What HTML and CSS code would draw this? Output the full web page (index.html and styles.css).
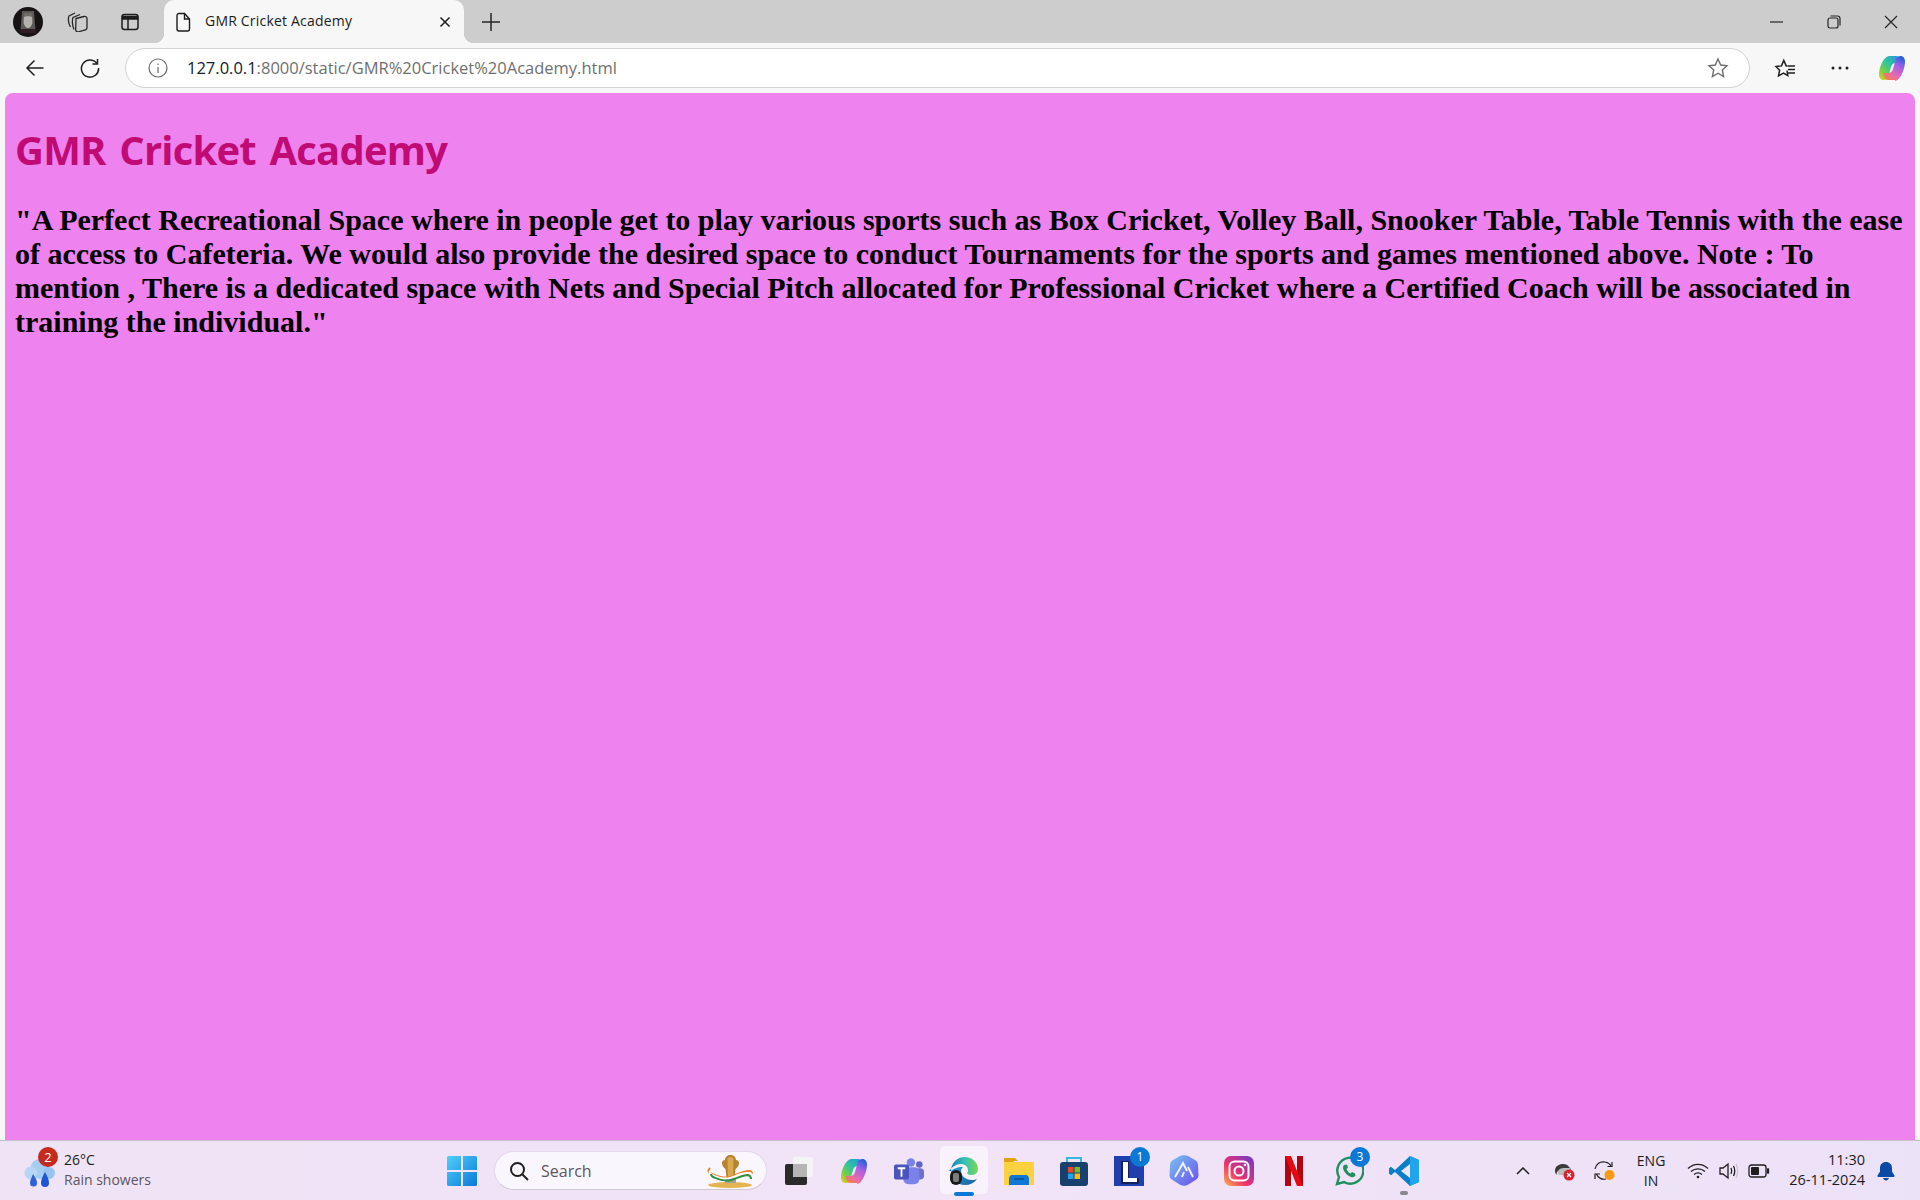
FILE: index.html
```html
<!DOCTYPE html>
<html lang="en">
<head>
    <meta charset="UTF-8">
    <meta name="viewport" content="width=device-width, initial-scale=1.0">
    <title>GMR Cricket Academy</title>
    <link rel="stylesheet" href="styles.css">
</head>
<body>
    <div class="tab-strip">
        <div class="strip-left">
            <svg class="avatar" viewBox="0 0 30 30" width="30" height="30">
                <circle cx="15" cy="15" r="15" fill="#171314"/>
                <path d="M9 4h12l1.500 20h-15z" fill="#5b5857"/>
                <path d="M11 7c2-1.500 6-1.500 8 0l.5 9c-1 3-2.500 5-4.500 5s-3.500-2-4.500-5z" fill="#b5b1ac"/>
                <path d="M11 7c2-1.500 6-1.500 8 0v3c-2-1-6-1-8 0z" fill="#6f6b69"/>
                <path d="M7.500 22h15l.5 4H7z" fill="#2f1c24"/>
            </svg>
            <svg class="strip-icon" viewBox="0 0 22 20" width="22" height="20" fill="none" stroke="#262626" stroke-width="1.300">
                <path d="M10 6.500l8-2c1.500-.3 3 .3 3 2v9c0 1-.5 2-1.500 2.300l-7 2c-1.500.3-2.500-.3-2.800-2z"/>
                <path d="M8 17.500C6 13 6 7.500 7 5.500l7-3"/>
                <path d="M4.500 15C2 11 2 6 3 4l6-3"/>
            </svg>
            <svg class="strip-icon" viewBox="0 0 20 20" width="20" height="20" fill="none" stroke="#1c1c1c" stroke-width="1.500">
                <rect x="2" y="2.500" width="16" height="15" rx="2.500"/>
                <path d="M2.500 4.500h15V7h-15z" fill="#1c1c1c"/>
                <path d="M8 7v10"/>
            </svg>
        </div>
        <div class="tab">
            <svg viewBox="0 0 16 20" width="16" height="20" fill="none" stroke="#1c1c1c" stroke-width="1.400">
                <path d="M2 3.500C2 2 3 1.500 4 1.500h5.500L14.500 7v10c0 1.200-.8 2-2 2H4c-1.200 0-2-.8-2-2z"/>
                <path d="M9.500 1.500V7h5"/>
            </svg>
            <span class="tab-title">GMR Cricket Academy</span>
            <svg class="tab-close" viewBox="0 0 12 12" width="12" height="12" fill="none" stroke="#1c1c1c" stroke-width="1.500">
                <path d="M1.500 1.500l9 9M10.500 1.500l-9 9"/>
            </svg>
        </div>
        <svg class="new-tab" viewBox="0 0 20 20" width="20" height="20" stroke="#262626" stroke-width="1.500">
            <path d="M10 1v18M1 10h18"/>
        </svg>
        <div class="window-buttons">
            <svg viewBox="0 0 14 14" width="14" height="14" stroke="#262626" stroke-width="1.200"><path d="M0 7h13"/></svg>
            <svg viewBox="0 0 14 14" width="14" height="14" fill="none" stroke="#262626" stroke-width="1.200">
                <rect x="1" y="3" width="10" height="10" rx="2"/>
                <path d="M3.500 1h7c1.500 0 2.500 1 2.500 2.500v7"/>
            </svg>
            <svg viewBox="0 0 14 14" width="14" height="14" stroke="#262626" stroke-width="1.200"><path d="M1 1l12 12M13 1L1 13"/></svg>
        </div>
    </div>

    <div class="toolbar">
        <svg class="nav-icon" viewBox="0 0 20 20" width="20" height="20" fill="none" stroke="#1f1f1f" stroke-width="1.500">
            <path d="M18.500 10H2M9.500 2.500L2 10l7.500 7.500"/>
        </svg>
        <svg class="nav-icon reload" viewBox="0 0 20 20" width="20" height="20" fill="none" stroke="#1f1f1f" stroke-width="1.500">
            <path d="M17 5.500A8.600 8.600 0 1 0 18.600 10"/>
            <path d="M17.500 1v5h-5"/>
        </svg>
        <div class="address-bar">
            <svg class="info-icon" viewBox="0 0 20 20" width="20" height="20" fill="none" stroke="#6c6c6c" stroke-width="1.200">
                <circle cx="10" cy="10" r="9"/>
                <path d="M10 9v6M10 5.500v1.500"/>
            </svg>
            <span class="url"><span class="url-host">127.0.0.1</span>:8000/static/GMR%20Cricket%20Academy.html</span>
            <svg class="fav-star" viewBox="0 0 22 22" width="22" height="22" fill="none" stroke="#6e6e6e" stroke-width="1.400">
                <path d="M11 2l2.700 6 6.300.7-4.700 4.300 1.300 6.500L11 16.200 5.400 19.500l1.300-6.500L2 8.700 8.300 8z"/>
            </svg>
        </div>
        <svg class="tool-icon favs" viewBox="0 0 22 22" width="22" height="22" fill="none" stroke="#1f1f1f" stroke-width="1.500">
            <path d="M13 13.500l.8 5-4.300-2.400-5 2.800 1.100-5.600L2 9.500l5.500-.6L9.800 3.500l2.400 5.400h1.500"/>
            <path d="M14 9h7M14 12.500h7M14 16h7"/>
        </svg>
        <svg class="tool-icon dots" viewBox="0 0 18 4" width="18" height="4" fill="#1f1f1f">
            <circle cx="2" cy="2" r="1.500"/><circle cx="9" cy="2" r="1.500"/><circle cx="16" cy="2" r="1.500"/>
        </svg>
        <svg class="tool-icon copilot-top" viewBox="0 0 28 28" width="28" height="28">
            <defs>
                <linearGradient id="copA" x1="1" y1="0" x2="0" y2="1">
                    <stop offset="0" stop-color="#1f8fe8"/><stop offset=".45" stop-color="#2fc4a0"/><stop offset=".75" stop-color="#7fd03c"/><stop offset="1" stop-color="#f2cf2a"/>
                </linearGradient>
                <linearGradient id="copB" x1=".8" y1="0" x2=".2" y2="1">
                    <stop offset="0" stop-color="#1f5fdc"/><stop offset=".35" stop-color="#a860e4"/><stop offset=".7" stop-color="#e86ab0"/><stop offset="1" stop-color="#f6823a"/>
                </linearGradient>
            </defs>
            <path d="M11 2h7c2 0 3 1 3.500 3L23 9h-5c-3 0-4.500 2-5 4l-2.500 9c-.7 2.500-2.500 4-5 4C2.500 26 1 23.500 1 20.500 1 14 5 3 11 2z" fill="url(#copA)"/>
            <path d="M17 26h-7c-2 0-3-1-3.500-3L5 19h5c3 0 4.500-2 5-4l2.500-9c.7-2.500 2.500-4 5-4 3 0 4.500 2.500 4.500 5.500 0 6.500-4 18.500-10 19.500z" fill="url(#copB)"/>
        </svg>
    </div>

    <div class="page-wrap">
        <main class="page">
            <h1>GMR Cricket Academy</h1>
            <h2>"A Perfect Recreational Space where in people get to play various sports such as Box Cricket, Volley Ball, Snooker Table, Table Tennis with the ease of access to Cafeteria. We would also provide the desired space to conduct Tournaments for the sports and games mentioned above. Note : To mention , There is a dedicated space with Nets and Special Pitch allocated for Professional Cricket where a Certified Coach will be associated in training the individual."</h2>
        </main>
    </div>

    <footer class="taskbar">
        <div class="weather">
            <div class="weather-icon">
                <svg viewBox="0 0 34 34" width="34" height="34">
                    <circle cx="17" cy="15" r="10" fill="#a5cdf2"/>
                    <circle cx="8" cy="19" r="6.500" fill="#b7d6f5"/>
                    <circle cx="26" cy="19" r="6" fill="#98c3ee"/>
                    <path d="M10 20c2 3 4 6 4 9a3.500 3.500 0 0 1-7 0c0-3 2-6 3-9z" fill="#2d62d8"/>
                    <path d="M22 18c2 4 4 7 4 11a4 4 0 0 1-8 0c0-4 2-7 4-11z" fill="#1f56d4"/>
                </svg>
                <span class="weather-badge">2</span>
            </div>
            <div class="weather-text">
                <span class="temp">26°C</span>
                <span class="forecast">Rain showers</span>
            </div>
        </div>

        <div class="task-center">
            <svg class="start" viewBox="0 0 30 30" width="30" height="30">
                <defs>
                    <linearGradient id="winA" x1="0" y1="0" x2="1" y2="1">
                        <stop offset="0" stop-color="#4fd0fb"/><stop offset="1" stop-color="#0a78d8"/>
                    </linearGradient>
                </defs>
                <path d="M1.500 0H14v14H0V1.500A1.500 1.500 0 0 1 1.500 0zM16 0h12.500A1.500 1.500 0 0 1 30 1.500V14H16zM0 16h14v14H1.500A1.500 1.500 0 0 1 0 28.500zM16 16h14v12.500a1.500 1.500 0 0 1-1.500 1.500H16z" fill="url(#winA)"/>
            </svg>
            <div class="search-box">
                <svg viewBox="0 0 20 20" width="20" height="20" fill="none" stroke="#1f1f1f" stroke-width="2">
                    <circle cx="8.500" cy="8.500" r="6.500"/><path d="M13.500 13.500L19 19"/>
                </svg>
                <span class="search-label">Search</span>
                <svg class="search-emblem" viewBox="0 0 48 34" width="48" height="34">
                    <ellipse cx="23" cy="31" rx="22" ry="3" fill="#e3b552"/>
                    <rect x="18" y="24" width="11" height="5" fill="#a5a19a"/>
                    <path d="M15 9c0-2 1.500-3 3-3 0-3 2.500-5 5.500-5s5.500 2 5.500 5c1.500 0 3 1 3 3 0 3-2 5-3.500 6l-1 9h-8l-1-9c-1.500-1-3.500-3-3.500-6z" fill="#b8832f"/>
                    <path d="M20.500 4c1.500-1.500 4.500-1.500 6 0l-.5 20h-5z" fill="#d9a850"/>
                    <path d="M3 14c-3 3-1 5 2 6 5 2 11 5 18 3 7-2 12-6 19-6 2 0 3 1 3 3" fill="none" stroke="#e9812a" stroke-width="2"/>
                    <path d="M3 17c-1 2 0 3 2 4 5 2 11 5 18 3 7-2 12-6 19-5 2 0 3 2 3 4" fill="none" stroke="#fff" stroke-width="2"/>
                    <path d="M4 20c0 2 1 2 2 3 5 2 11 5 18 3 7-2 11-5 17-5 2 .5 3 2 3 4" fill="none" stroke="#2f8f3c" stroke-width="2"/>
                </svg>
            </div>
            <div class="task-icons">
                <svg class="task-icon" viewBox="0 0 30 30" width="30" height="30">
                    <rect x="9" y="1" width="20" height="20" rx="2" fill="#f4f4f4" opacity=".9"/>
                    <rect x="1" y="8" width="22" height="21" rx="2" fill="#2a2a2a"/>
                    <rect x="9" y="8" width="14" height="13" fill="#b5b5b5"/>
                </svg>
                <svg class="task-icon" viewBox="0 0 28 28" width="28" height="28">
                    <path d="M11 2h7c2 0 3 1 3.500 3L23 9h-5c-3 0-4.500 2-5 4l-2.500 9c-.7 2.500-2.500 4-5 4C2.500 26 1 23.500 1 20.500 1 14 5 3 11 2z" fill="url(#copA)"/>
                    <path d="M17 26h-7c-2 0-3-1-3.500-3L5 19h5c3 0 4.500-2 5-4l2.500-9c.7-2.500 2.500-4 5-4 3 0 4.500 2.500 4.500 5.500 0 6.500-4 18.500-10 19.500z" fill="url(#copB)"/>
                </svg>
                <svg class="task-icon" viewBox="0 0 32 30" width="32" height="30">
                    <circle cx="27" cy="8" r="3.500" fill="#6264c8"/>
                    <rect x="22" y="12" width="10" height="12" rx="4" fill="#6d70cc"/>
                    <circle cx="18" cy="6" r="4.500" fill="#7b83eb"/>
                    <rect x="10" y="11" width="17" height="18" rx="5" fill="#7b83eb"/>
                    <rect x="0" y="8" width="16" height="16" rx="2" fill="#4b53bc"/>
                    <path d="M4 12h8M8 12v9" stroke="#fff" stroke-width="2" fill="none"/>
                </svg>
                <div class="task-active">
                    <svg viewBox="0 0 30 30" width="30" height="30">
                        <defs>
                            <linearGradient id="edgeA" x1="0" y1="0" x2="1" y2="1">
                                <stop offset="0" stop-color="#2a9fd8"/><stop offset="1" stop-color="#1c5f9f"/>
                            </linearGradient>
                            <linearGradient id="edgeB" x1="0" y1="0" x2="1" y2="0">
                                <stop offset="0" stop-color="#1a78c0"/><stop offset=".55" stop-color="#35c1b1"/><stop offset="1" stop-color="#7dd854"/>
                            </linearGradient>
                        </defs>
                        <path d="M2 15C2 7 8 1 16 1c7 0 13 5 13 12 0 4-3 6-7 6-2 0-4-1-4-2 1-1 1-2 1-3 0-3-3-6-7-6-5 0-9 3-12 7z" fill="url(#edgeB)"/>
                        <path d="M2 15c0 8 6 14 14 14 5 0 9-2 12-6-1 .5-3 1-5 1-5 0-11-3-11-9 0-2 1-3 2-4-6 0-10 2-12 4z" fill="url(#edgeA)"/>
                        <rect x="1" y="14" width="12" height="15" rx="6" fill="#1a1a1a"/>
                        <rect x="4" y="17" width="6" height="9" rx="2" fill="#7d7d7d"/>
                    </svg>
                    <span class="active-pip"></span>
                </div>
                <svg class="task-icon" viewBox="0 0 30 30" width="30" height="30">
                    <path d="M0 2h11l3 3h-4l-2 3H0z" fill="#dfa40f"/>
                    <path d="M0 6h30v23H0z" fill="#fbd13f"/>
                    <path d="M5 23c0-2 1-4 3-4h14c2 0 3 2 3 4v6H5z" fill="#0f78d4"/>
                    <path d="M10 23h10" stroke="#0b4f8c" stroke-width="1.500"/>
                </svg>
                <svg class="task-icon" viewBox="0 0 30 32" width="30" height="32">
                    <path d="M8 8V3h14v5" fill="none" stroke="#35b8e0" stroke-width="2"/>
                    <rect x="1" y="7" width="28" height="24" rx="3" fill="#17406e"/>
                    <rect x="9" y="12" width="5.500" height="5.500" fill="#e8492c"/>
                    <rect x="15.500" y="12" width="5.500" height="5.500" fill="#7db824"/>
                    <rect x="9" y="18.500" width="5.500" height="5.500" fill="#20a4ee"/>
                    <rect x="15.500" y="18.500" width="5.500" height="5.500" fill="#fcb817"/>
                </svg>
                <div class="task-badged">
                    <svg viewBox="0 0 30 30" width="30" height="30">
                        <rect width="30" height="30" fill="#1f3fae"/>
                        <path d="M7 5h8v17h10v6H7z" fill="#12205c"/>
                        <path d="M9 6h5v16h9v4H9z" fill="#fff"/>
                    </svg>
                    <span class="count-badge">1</span>
                </div>
                <svg class="task-icon" viewBox="0 0 30 32" width="30" height="32">
                    <defs>
                        <linearGradient id="arcA" x1="0" y1="0" x2="1" y2="1">
                            <stop offset="0" stop-color="#79c5ee"/><stop offset="1" stop-color="#6a4bee"/>
                        </linearGradient>
                    </defs>
                    <path d="M11 1c2-1 6-1 8 0l7 4c2 1 3 3 3 5l.5 10c0 2-1 4-3 5l-8 5c-2 1-5 1-7 0l-8-5c-2-1-3-3-3-5L1 10c0-2 1-4 3-5z" fill="url(#arcA)"/>
                    <path d="M6 22L14 8l4 8M13 22l2-5M19 12l5 10" fill="none" stroke="#eef2ff" stroke-width="2"/>
                </svg>
                <svg class="task-icon" viewBox="0 0 30 30" width="30" height="30">
                    <defs>
                        <linearGradient id="instaA" x1="0" y1="1" x2="1" y2="0">
                            <stop offset="0" stop-color="#fdb54a"/><stop offset=".4" stop-color="#ee2f6b"/><stop offset="1" stop-color="#6b3cd0"/>
                        </linearGradient>
                    </defs>
                    <rect width="30" height="30" rx="7" fill="url(#instaA)"/>
                    <rect x="5.500" y="5.500" width="19" height="19" rx="5" fill="none" stroke="#fff" stroke-width="2"/>
                    <circle cx="15" cy="15" r="4.500" fill="none" stroke="#fff" stroke-width="2"/>
                    <circle cx="21" cy="9" r="1.300" fill="#fff"/>
                </svg>
                <svg class="task-icon" viewBox="0 0 18 30" width="18" height="30">
                    <path d="M0 0h6v30l-6 0z" fill="#b1060f"/>
                    <path d="M12 0h6v30h-6z" fill="#b1060f"/>
                    <path d="M0 0h6l12 30h-6z" fill="#e50914"/>
                </svg>
                <div class="task-badged">
                    <svg viewBox="0 0 30 30" width="30" height="30" fill="none">
                        <path d="M3 28l2-7A13 13 0 1 1 10 26z" stroke="#1f8f5f" stroke-width="2.400"/>
                        <path d="M10 9c-1 1-1.500 3 0 6 2 3 4 5 7 6 2 .5 3.500 0 4.500-1.500l-.5-2-3-1.500-1.500 1.500c-2-1-3-2.500-4-4.500l1.500-1.500-1-3z" fill="#1f8f5f"/>
                    </svg>
                    <span class="count-badge">3</span>
                </div>
                <div class="task-running">
                    <svg viewBox="0 0 30 30" width="30" height="30">
                        <path d="M21 0l9 4v22l-9 4-15-14-4 3-2-1.500v-5L2 11l4 3z" fill="#0a7ec8"/>
                        <path d="M21 0l9 4v22l-9 4z" fill="#1fa5ea"/>
                        <path d="M21 8v14l-9-7z" fill="#f1e3f7"/>
                        <path d="M2 11l4 4-4 4 -2-1.500v-5z" fill="#0a7ec8"/>
                    </svg>
                    <span class="running-pip"></span>
                </div>
            </div>
        </div>

        <div class="tray">
            <svg class="chevron" viewBox="0 0 14 8" width="14" height="8" fill="none" stroke="#1c1c1c" stroke-width="1.500"><path d="M1 7l6-6 6 6"/></svg>
            <svg class="tray-icon cloud" viewBox="0 0 22 20" width="22" height="20">
                <path d="M1 10c0-5 4-7 8-7 3 0 5 1 6 3 2 1 2 3 2 4H5c-2 0-3 2-2 4-1-1-2-2-2-4z" fill="#3a3a3a"/>
                <path d="M4 10c1-2 3-3 6-3h6c1 3 0 7-3 7H6c-2 0-3-2-2-4z" fill="#bdbdbd"/>
                <circle cx="15" cy="14" r="5.500" fill="#d8202f"/>
                <path d="M13 12l4 4M17 12l-4 4" stroke="#fff" stroke-width="1.200"/>
            </svg>
            <svg class="tray-icon sync" viewBox="0 0 22 22" width="22" height="22" fill="none" stroke="#1f1f1f" stroke-width="1.200">
                <path d="M1 9C2 4 6 1 11 2c3 .5 5 2 6 4"/>
                <path d="M18 2v4.500h-4.500"/>
                <path d="M12 19c-4 1-8-1-9.500-5"/>
                <path d="M1 19v-5h5"/>
                <circle cx="15.500" cy="15" r="5" fill="#f79a0e" stroke="none"/>
            </svg>
            <div class="lang"><span>ENG</span><span>IN</span></div>
            <svg class="tray-icon wifi" viewBox="0 0 22 16" width="22" height="16" fill="none" stroke="#1f1f1f" stroke-width="1.300">
                <path d="M1 5.500c6-5.500 14-5.500 20 0M4 8.500c4-3.500 10-3.500 14 0M7 11.500c2.500-2 5.500-2 8 0"/>
                <circle cx="11" cy="14" r="1.300" fill="#1f1f1f" stroke="none"/>
            </svg>
            <svg class="tray-icon speaker" viewBox="0 0 20 18" width="20" height="18" fill="none" stroke="#1f1f1f" stroke-width="1.300">
                <path d="M1 6h3l5-4v14l-5-4H1z"/>
                <path d="M12 6c1 2 1 4 0 6M14.500 4c1.500 3 1.500 7 0 10"/>
                <path d="M17 2c2 4 2 10 0 14" stroke="#c9c0cf"/>
            </svg>
            <svg class="tray-icon battery" viewBox="0 0 22 14" width="22" height="14" fill="none" stroke="#1f1f1f" stroke-width="1.300">
                <rect x="1" y="1" width="17" height="12" rx="2.500"/>
                <rect x="3" y="3" width="8" height="8" rx="1" fill="#1f1f1f" stroke="none"/>
                <path d="M19.500 5h1v4h-1z" fill="#1f1f1f"/>
            </svg>
            <div class="clock"><span>11:30</span><span>26-11-2024</span></div>
            <svg class="bell" viewBox="0 0 18 20" width="18" height="20" fill="#0b4aa2">
                <path d="M9 1c-3.500 0-6 2.500-6 6v3.500L.500 14.500c-.3.700 0 1.500 1 1.500h15c1 0 1.300-.8 1-1.500L15 10.500V7c0-3.500-2.500-6-6-6z"/>
                <path d="M6 17h6c-.5 1.500-1.500 2.500-3 2.500S6.500 18.500 6 17z"/>
            </svg>
        </div>
    </footer>
</body>
</html>
```

FILE: styles.css
```css
* {
    box-sizing: border-box;
}
html, body {
    height: 100%;
}
body {
    margin: 0;
    display: flex;
    flex-direction: column;
    font-family: "Open Sans", "Noto Sans", sans-serif;
    background-color: #f7f7f7;
    overflow: hidden;
}
svg {
    display: block;
    flex-shrink: 0;
}

/* browser chrome */
.tab-strip {
    height: 43px;
    display: flex;
    align-items: center;
    background-color: #cdcdcd;
}
.strip-left {
    width: 164px;
    display: flex;
    align-items: center;
    padding-left: 13px;
}
.strip-left .strip-icon:nth-child(2) {
    margin-left: 23px;
}
.strip-left .strip-icon:nth-child(3) {
    margin-left: 32px;
}
.tab {
    width: 300px;
    height: 43px;
    position: relative;
    display: flex;
    align-items: center;
    padding: 0 13px 0 11px;
    background-color: #f7f7f7;
    border-radius: 10px 10px 0 0;
}
.tab::before,
.tab::after {
    content: "";
    position: absolute;
    bottom: 0;
    width: 10px;
    height: 10px;
}
.tab::before {
    left: -10px;
    background: radial-gradient(circle at 0 0, transparent 10px, #f7f7f7 10.500px);
}
.tab::after {
    right: -10px;
    background: radial-gradient(circle at 100% 0, transparent 10px, #f7f7f7 10.500px);
}
.tab-title {
    margin: -2px 0 0 14px;
    font-size: 14px;
    letter-spacing: .2px;
    color: #1c1c1c;
    white-space: nowrap;
}
.tab-close {
    margin-left: auto;
}
.new-tab {
    margin-left: 17px;
}
.window-buttons {
    margin-left: auto;
    display: flex;
    align-items: center;
    gap: 43px;
    padding-right: 22px;
}
.toolbar {
    height: 50px;
    display: flex;
    align-items: center;
    background-color: #f7f7f7;
    padding-bottom: 1px;
}
.toolbar .nav-icon:first-child {
    margin-left: 25px;
}
.toolbar .reload {
    margin-left: 35px;
}
.address-bar {
    width: 1625px;
    height: 40px;
    margin-left: 25px;
    display: flex;
    align-items: center;
    padding: 0 20px 0 22px;
    background-color: #fff;
    border: 1px solid #d2d2d2;
    border-radius: 20px;
}
.url {
    margin-left: 19px;
    font-size: 16.500px;
    color: #6f6f6f;
    white-space: nowrap;
}
.url-host {
    color: #14202e;
}
.fav-star {
    margin-left: auto;
}
.favs {
    margin-left: 24px;
}
.dots {
    margin-left: 35px;
}
.copilot-top {
    margin-left: 29px;
}

/* page */
.page-wrap {
    flex: 1;
    min-height: 0;
    padding: 0 5px;
}
.page {
    height: 100%;
    padding: 10px;
    background-color: violet;
    border-radius: 8px 8px 0 0;
    overflow: hidden;
}
h1 {
    margin: 19px 0 0;
    font-family: "Comic Sans MS", "Open Sans", sans-serif;
    font-size: 40px;
    font-weight: bold;
    line-height: 56px;
    letter-spacing: -.8px;
    word-spacing: 4px;
    color: #c00a74;
}
h2 {
    margin: 25px 0 0;
    font-family: "Liberation Serif", serif;
    font-size: 30px;
    font-weight: bold;
    line-height: 34px;
    color: #000;
}

/* taskbar */
.taskbar {
    height: 60px;
    display: flex;
    align-items: center;
    background: linear-gradient(90deg, #efe3f6, #f2e3f7 50%, #ece2f7);
    border-top: 1px solid #c8bfcc;
    color: #1c1c1c;
}
.weather {
    width: 447px;
    display: flex;
    align-items: center;
    padding-left: 23px;
}
.weather-icon {
    position: relative;
}
.weather-badge {
    position: absolute;
    top: -7px;
    left: 15px;
    width: 20px;
    height: 20px;
    border-radius: 50%;
    background-color: #c42b1c;
    color: #fff;
    font-size: 13px;
    line-height: 20px;
    text-align: center;
}
.weather-text {
    display: flex;
    flex-direction: column;
    gap: 2px;
    margin: -2px 0 0 7px;
    font-size: 14px;
    line-height: 18px;
}
.forecast {
    color: #5a5560;
}
.task-center {
    display: flex;
    align-items: center;
}
.search-box {
    width: 273px;
    height: 39px;
    margin-left: 17px;
    display: flex;
    align-items: center;
    padding: 0 11px 0 14px;
    background-color: #faf6fe;
    border: 1px solid #e2d8e8;
    border-bottom-color: #cfc6d6;
    border-radius: 20px;
}
.search-label {
    margin-left: 12px;
    font-size: 16px;
    color: #5b5660;
}
.search-emblem {
    margin-left: auto;
}
.task-icons {
    display: flex;
    align-items: center;
    gap: 25px;
    margin-left: 17px;
}
.task-icons > * {
    width: 30px;
}
.task-active,
.task-badged,
.task-running {
    position: relative;
    height: 30px;
}
.task-active::before {
    content: "";
    position: absolute;
    top: -10px;
    left: -9px;
    width: 48px;
    height: 48px;
    background-color: #f9f2fc;
    border-radius: 5px;
}
.task-active svg {
    position: relative;
}
.active-pip {
    position: absolute;
    left: 5px;
    bottom: -10px;
    width: 20px;
    height: 4px;
    border-radius: 2px;
    background-color: #0a78d4;
}
.running-pip {
    position: absolute;
    left: 11px;
    bottom: -9px;
    width: 8px;
    height: 4px;
    border-radius: 2px;
    background-color: #8a8590;
}
.count-badge {
    position: absolute;
    top: -9px;
    right: -6px;
    width: 20px;
    height: 20px;
    border-radius: 50%;
    background-color: #0a78d4;
    color: #fff;
    font-size: 12px;
    line-height: 20px;
    text-align: center;
}
.tray {
    margin-left: auto;
    display: flex;
    align-items: center;
    padding-right: 25px;
}
.cloud {
    margin-left: 24px;
}
.sync {
    margin-left: 18px;
}
.lang {
    display: flex;
    flex-direction: column;
    align-items: center;
    margin-left: 21px;
    font-size: 14px;
    line-height: 20px;
}
.wifi {
    margin-left: 22px;
}
.speaker {
    margin-left: 10px;
}
.battery {
    margin-left: 9px;
}
.clock {
    display: flex;
    flex-direction: column;
    align-items: flex-end;
    gap: 1px;
    margin: -2px 0 0 19px;
    font-size: 14.500px;
    line-height: 19px;
}
.bell {
    margin-left: 12px;
}
```
